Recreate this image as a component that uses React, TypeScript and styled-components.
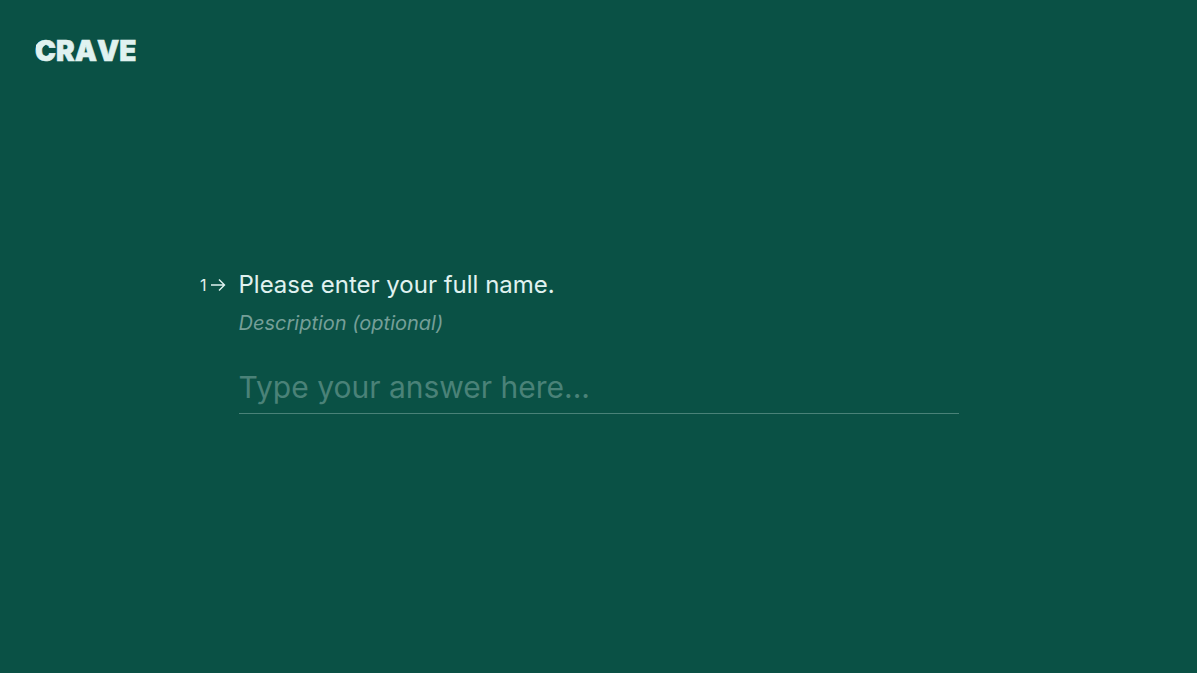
import React, { useState } from "react";
import styled, { createGlobalStyle } from "styled-components";

const colors = {
  background: "#0a5145",
  text: "#e0f2f0",
  muted: "#759f98",
  placeholder: "#4a8278",
  line: "#4a8278",
};

const GlobalStyle = createGlobalStyle`
  * { box-sizing: border-box; }
  body {
    margin: 0;
    background: ${colors.background};
    color: ${colors.text};
    font-family: Inter, "Liberation Sans", sans-serif;
  }
`;

const Page = styled.div`
  min-height: 100vh;
  padding-top: 10px;
  display: grid;
  grid-template-rows: 1fr auto 1fr;
`;

const Header = styled.header`
  padding: 20px 32px 0;
`;

const LogoLink = styled.a`
  display: inline-block;
  color: inherit;
`;

const Wordmark = styled.svg`
  display: block;
  font-family: Inter, sans-serif;
  font-weight: 900;
  font-size: 28px;
  font-kerning: none;
`;

const Form = styled.form`
  width: 100%;
  max-width: 800px;
  margin: 0 auto;
  padding: 0 40px;
`;

const QuestionRow = styled.div`
  display: flex;
  align-items: center;
  margin-left: -40px;
`;

const Counter = styled.div`
  width: 40px;
  padding-right: 13px;
  display: flex;
  align-items: center;
  justify-content: flex-end;
  gap: 3px;
  font-size: 16px;
  line-height: 32px;
`;

const Question = styled.label`
  font-size: 24px;
  line-height: 32px;
`;

const Description = styled.p`
  margin: 8px 0 32px;
  color: ${colors.muted};
  font-size: 20px;
  font-style: italic;
  line-height: 28px;
`;

const Answer = styled.input`
  display: block;
  width: 100%;
  padding: 0 0 8px;
  border: 0;
  border-bottom: 1px solid ${colors.line};
  border-radius: 0;
  outline: 0;
  background: transparent;
  color: ${colors.text};
  font-family: inherit;
  font-size: 30px;
  line-height: 36px;

  &::placeholder {
    color: ${colors.placeholder};
    opacity: 1;
  }
`;

function Logo() {
  return (
    <LogoLink href="#" aria-label="Crave">
      <Wordmark width="124" height="44" viewBox="0 0 124 44" fill="currentColor">
        <text x="3" y="31" stroke="currentColor" strokeWidth="0.6">CRAVE</text>
        <path d="M4 20 L4 15 L7 12 L9 13 L11 11 L14 11 L14 14 L8 20 Z" />
      </Wordmark>
    </LogoLink>
  );
}

function Arrow() {
  return (
    <svg width="16" height="16" viewBox="0 0 16 16" fill="none" stroke="currentColor" strokeWidth="1.4" aria-hidden="true">
      <path d="M1 8H14.5M9 2.5L14.5 8L9 13.5" />
    </svg>
  );
}

export default function App() {
  const [name, setName] = useState("");

  return (
    <>
      <GlobalStyle />
      <Page>
        <Header>
          <Logo />
        </Header>
        <Form onSubmit={(event: React.FormEvent) => event.preventDefault()}>
          <QuestionRow>
            <Counter>
              <span>1</span>
              <Arrow />
            </Counter>
            <Question htmlFor="full-name">Please enter your full name.</Question>
          </QuestionRow>
          <Description id="full-name-description">Description (optional)</Description>
          <Answer
            id="full-name"
            type="text"
            placeholder="Type your answer here..."
            aria-describedby="full-name-description"
            value={name}
            onChange={(event) => setName(event.target.value)}
          />
        </Form>
      </Page>
    </>
  );
}
